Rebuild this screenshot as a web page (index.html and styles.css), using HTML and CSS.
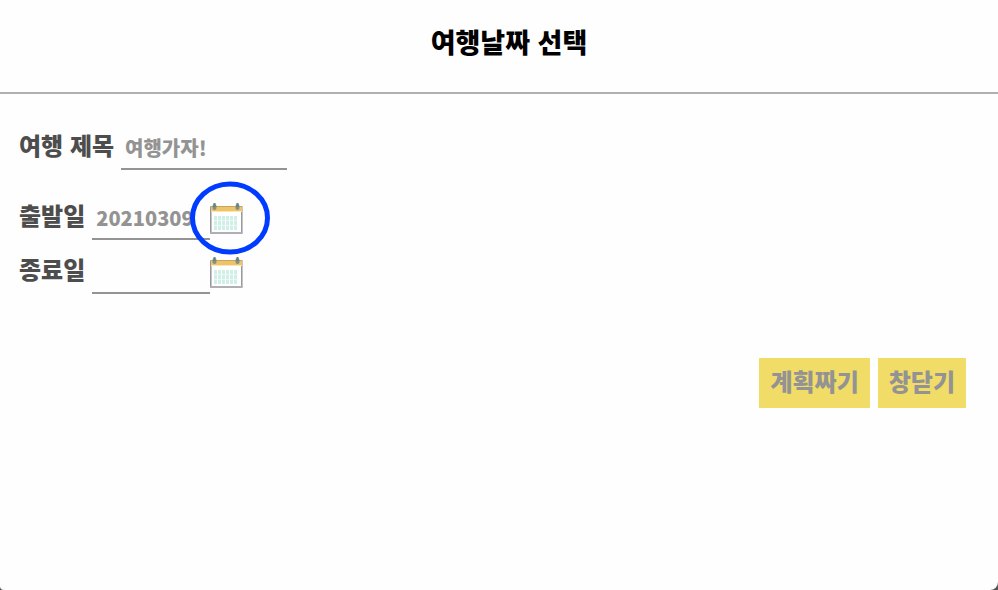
FILE: index.html
```html
<!DOCTYPE html>
<html lang="ko">
<head>
<meta charset="utf-8">
<meta name="viewport" content="width=device-width, initial-scale=1">
<title>여행날짜 선택</title>
<link rel="stylesheet" href="styles.css">
</head>
<body>
<svg class="defs" aria-hidden="true">
  <symbol id="calendar" viewBox="0 0 34 34">
    <rect x="0.800" y="5" width="31" height="26" fill="#fff" stroke="#949497" stroke-width="1.500"/>
    <path d="M0 30.800H32.500" stroke="#b0b0b2" stroke-width="1.600"/>
    <rect x="1" y="4" width="31" height="5" fill="#efc368"/>
    <path d="M1 4.500H32" stroke="#c9a360"/>
    <path d="M1 9.500H32" stroke="#f8e5ba"/>
    <g stroke="#d0f0e7" stroke-width="4" stroke-dasharray="3 1">
      <path d="M4 16H28M4 21H28M4 26H28"/>
    </g>
    <path d="M4 18.500H28M4 23.500H28" stroke="#eaf9f5"/>
    <rect x="2.500" y="2" width="4" height="6" rx="2" fill="#7d9388"/>
    <rect x="25.500" y="2" width="4" height="6" rx="2" fill="#7d9388"/>
    <path d="M4.500 1V5M27.500 1V5" stroke="#66817a" stroke-width="2"/>
  </symbol>
</svg>
<div class="window">
  <header class="header"><h1 class="title">여행날짜 선택</h1></header>
  <form class="form">
    <div class="row row-title">
      <label class="label" for="trip-title">여행 제목</label>
      <input class="field" id="trip-title" type="text" value="여행가자!">
    </div>
    <div class="row">
      <label class="label" for="start">출발일</label>
      <input class="field field-date" id="start" type="text" value="20210309">
      <button class="pick" type="button" aria-label="출발일 달력">
        <svg class="icon" viewBox="0 0 34 34"><use href="#calendar"/></svg>
        <svg class="ring" viewBox="0 0 80 74"><ellipse cx="40" cy="37" rx="37.500" ry="34" fill="none" stroke="#003cff" stroke-width="5"/></svg>
      </button>
    </div>
    <div class="row">
      <label class="label" for="end">종료일</label>
      <input class="field field-date" id="end" type="text">
      <button class="pick" type="button" aria-label="종료일 달력">
        <svg class="icon" viewBox="0 0 34 34"><use href="#calendar"/></svg>
      </button>
    </div>
    <div class="actions">
      <button class="button" type="submit">계획짜기</button>
      <button class="button" type="button">창닫기</button>
    </div>
  </form>
</div>
</body>
</html>
```
FILE: styles.css
```css
* {
  box-sizing: border-box;
}

html {
  background: #555;
}

body {
  margin: 0;
  font-family: "Noto Sans CJK KR", sans-serif;
  font-weight: 900;
}

.defs {
  display: none;
}

.window {
  min-height: 100vh;
  background: #fefefe;
  border-radius: 0 0 8px 4px;
}

.header {
  padding: 24px 0 32px 20px;
  border-bottom: 2px solid #b0b0b0;
  text-align: center;
}

.title {
  margin: 0;
  color: #000;
  font-size: 27px;
  font-weight: 900;
  line-height: 36px;
}

.form {
  display: flex;
  flex-direction: column;
  gap: 4px;
  padding: 26px 32px 32px 19px;
}

.row {
  display: flex;
  align-items: flex-end;
  height: 50px;
}

.row-title {
  margin-bottom: 16px;
}

.label {
  margin-right: 7px;
  padding-bottom: 7px;
  color: #4d4d4d;
  font-size: 24px;
  line-height: 36px;
}

.field {
  width: 166px;
  height: 44px;
  padding: 0 4px;
  border: 0;
  border-bottom: 2px solid #939393;
  border-radius: 0;
  background: transparent;
  color: #939393;
  font: inherit;
  font-size: 20px;
  outline: 0;
}

.field-date {
  width: 118px;
}

.pick {
  position: relative;
  display: flex;
  padding: 0 0 4px;
  border: 0;
  background: none;
  cursor: pointer;
}

.icon {
  width: 34px;
  height: 34px;
}

.ring {
  position: absolute;
  top: -21px;
  left: -20px;
  width: 80px;
  height: 74px;
  pointer-events: none;
}

.actions {
  display: flex;
  justify-content: flex-end;
  gap: 8px;
  margin-top: 60px;
}

.button {
  padding: 5px 11px 9px;
  border: 0;
  background: #f1dc68;
  color: #939393;
  font: inherit;
  font-size: 24px;
  line-height: 36px;
  cursor: pointer;
}
```
